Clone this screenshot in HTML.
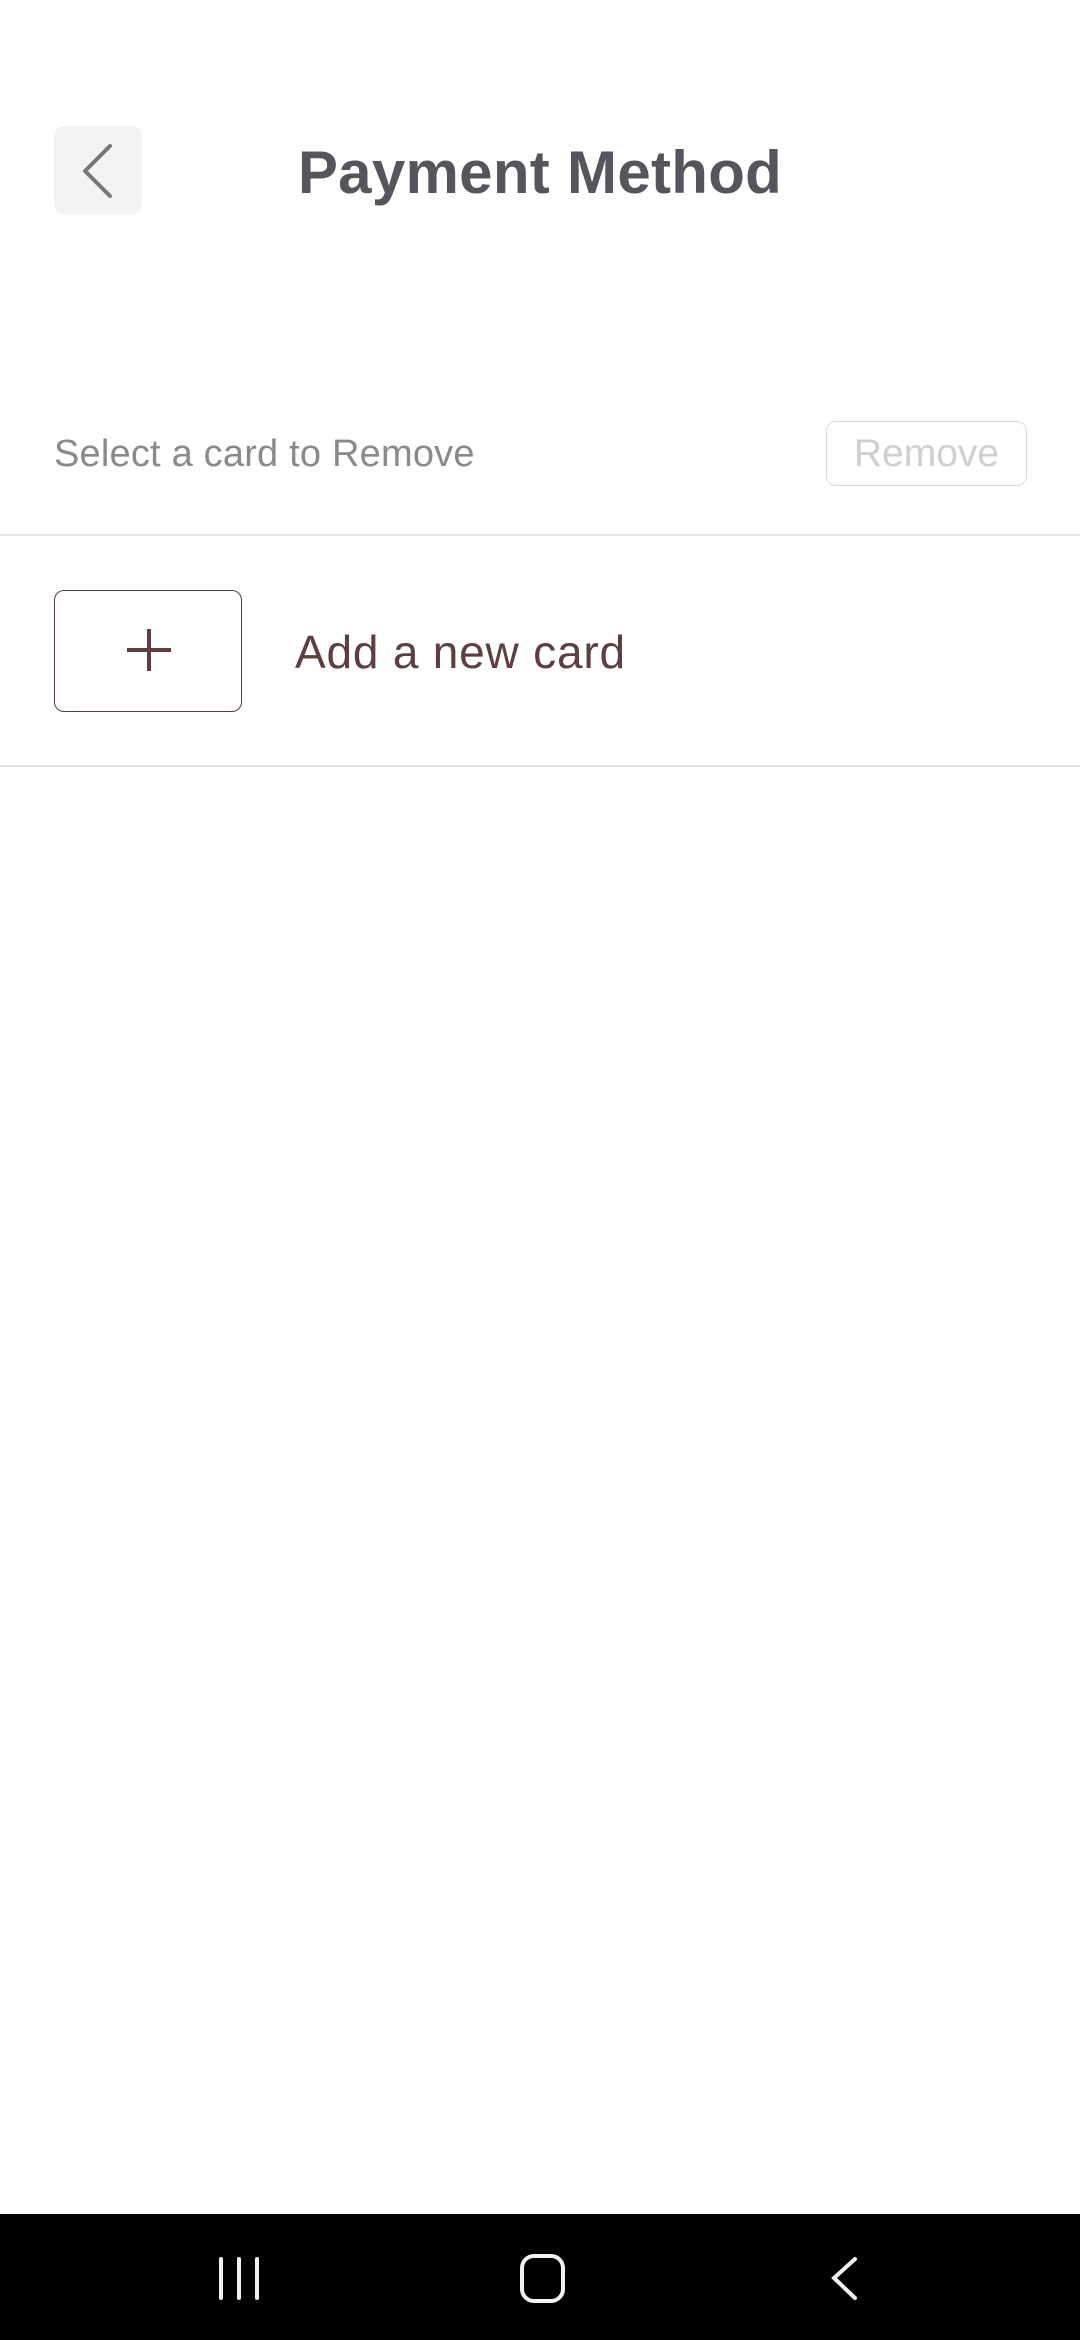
<!DOCTYPE html>
<html><head><meta charset="utf-8"><style>
body{margin:0;width:1080px;height:2340px;background:#fff;position:relative;overflow:hidden;font-family:"Liberation Sans",sans-serif}
.a{position:absolute}
</style></head><body>
<div class="a" style="left:54px;top:126px;width:88px;height:88px;background:#f3f3f3;border-radius:10px"></div>
<svg class="a" style="left:54px;top:126px" width="88" height="88"><path d="M56 20 L31 45 L56 70" fill="none" stroke="#77777d" stroke-width="4" stroke-linecap="round" stroke-linejoin="round"/></svg>
<div class="a" style="left:280px;top:138px;width:520px;text-align:center;font-weight:bold;font-size:60px;letter-spacing:0.3px;color:#55555d;line-height:70px">Payment Method</div>
<div class="a" style="left:54px;top:431px;font-size:38px;color:#8a8a8a;line-height:46px;letter-spacing:0.2px">Select a card to Remove</div>
<div class="a" style="left:826px;top:421px;width:199px;height:63px;border:1.5px solid #dadada;border-radius:10px;box-sizing:content-box;text-align:center;line-height:63px;font-size:39px;color:#cfcfcf">Remove</div>
<div class="a" style="left:0;top:534px;width:1080px;height:2px;background:#e6e6e6"></div>
<div class="a" style="left:54px;top:590px;width:186px;height:120px;border:1.5px solid #5a3c3e;border-radius:10px"></div>
<div class="a" style="left:127px;top:648px;width:44px;height:4px;background:#5d3f42"></div>
<div class="a" style="left:147px;top:629px;width:4px;height:42px;background:#5d3f42"></div>
<div class="a" style="left:295px;top:624px;font-size:46px;color:#5d3f42;line-height:56px;letter-spacing:0.8px">Add a new card</div>
<div class="a" style="left:0;top:765px;width:1080px;height:2px;background:#e6e6e6"></div>
<div class="a" style="left:0;top:2214px;width:1080px;height:126px;background:#000"></div>
<svg class="a" style="left:0;top:2214px" width="1080" height="126">
<g stroke="#f2f2f2" stroke-width="4" stroke-linecap="round" fill="none">
<line x1="221" y1="45" x2="221" y2="84"/><line x1="239" y1="45" x2="239" y2="84"/><line x1="257" y1="45" x2="257" y2="84"/>
<rect x="522" y="42" width="41" height="45" rx="12"/>
<path d="M855 45 L834 64 L855 84"/>
</g></svg>
</body></html>
